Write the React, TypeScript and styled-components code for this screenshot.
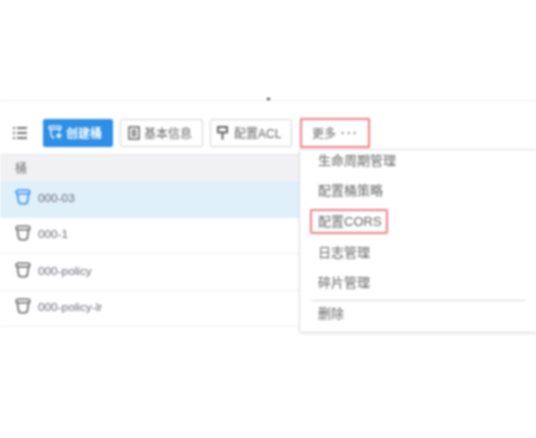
import styled, { createGlobalStyle } from "styled-components";
import type { ReactNode } from "react";

const GlobalStyle = createGlobalStyle`
  html, body {
    margin: 0;
    padding: 0;
    background: #fff;
  }
  body {
    font-family: "Liberation Sans", "Noto Sans CJK SC", sans-serif;
    color: #666;
  }
`;

function BucketIcon({ color = "#666" }: { color?: string }) {
  return (
    <BucketSvg width="16" height="16" viewBox="0 0 16 16" fill="none" stroke={color} strokeWidth="1.6">
      <rect x="1.2" y="1.2" width="13.6" height="3.6" rx="1.8" />
      <path d="M2.4 5 L3.5 12.2 Q3.8 14.8 6.2 14.8 H9.8 Q12.2 14.8 12.5 12.2 L13.6 5" />
    </BucketSvg>
  );
}

function CreateIcon() {
  return (
    <svg width="15" height="15" viewBox="0 0 16 16" fill="none" stroke="#fff" strokeWidth="1.5">
      <rect x="1" y="1.2" width="13" height="3" rx="1.5" />
      <path d="M2.6 4.5 L3.6 11.6 Q3.9 13.4 5.6 13.4 H7 M12.6 4.5 L12.2 7" />
      <path d="M11.5 8.4 V14.4 M8.6 11.4 H14.6" strokeWidth="1.9" />
    </svg>
  );
}

function InfoIcon() {
  return (
    <svg width="12" height="14" viewBox="0 0 12 14" fill="none" stroke="#555" strokeWidth="1.4">
      <rect x="1" y="1" width="10" height="12" />
      <path d="M3.6 4.5 H8.4 M3.6 7 H8.4 M3.6 9.5 H8.4" />
    </svg>
  );
}

function AclIcon() {
  return (
    <svg width="11" height="14" viewBox="0 0 11 14" fill="none" stroke="#555" strokeWidth="1.8">
      <rect x="1" y="1" width="9" height="5.4" />
      <path d="M5.5 6.4 V13.6" />
    </svg>
  );
}

function ListIcon() {
  return (
    <svg width="14" height="14" viewBox="0 0 14 14" fill="none" stroke="#444" strokeWidth="1.7">
      <path d="M0 2 H2 M4 2 H14 M0 7 H2 M4 7 H14 M0 12 H2 M4 12 H14" />
    </svg>
  );
}

const BucketSvg = styled.svg`
  margin-bottom: 2px;
`;

const Page = styled.div`
  position: relative;
  width: 536px;
  height: 438px;
  padding-top: 100px;
  box-sizing: border-box;
  overflow: hidden;
  background: #fff;
  filter: blur(0.8px);
`;

const Tick = styled.span`
  position: absolute;
  left: 267px;
  top: 98px;
  width: 3px;
  height: 2px;
  background: #333;
`;

const Toolbar = styled.div`
  display: flex;
  align-items: center;
  height: 55px;
  box-sizing: border-box;
  padding: 11px 0 0 13px;
  border-top: 1px solid #f1f1f1;
  border-bottom: 1px solid #e6e6e8;
`;

const ListToggle = styled.span`
  display: flex;
  margin-right: 16px;
`;

const ToolButton = styled.button<{ $primary?: boolean; $width: number; $gap: number; $inset: number; $iconGap: number }>`
  display: flex;
  align-items: center;
  gap: ${(p) => p.$iconGap}px;
  width: ${(p) => p.$width}px;
  height: 28px;
  padding: 0 0 1px ${(p) => p.$inset}px;
  margin-right: ${(p) => p.$gap}px;
  box-sizing: border-box;
  font: 12px "Liberation Sans", "Noto Sans CJK SC", sans-serif;
  font-weight: ${(p) => (p.$primary ? 700 : 400)};
  color: ${(p) => (p.$primary ? "#fff" : "#666")};
  background: ${(p) => (p.$primary ? "#2d8fe6" : "#fff")};
  border: 1px solid ${(p) => (p.$primary ? "#2d8fe6" : "#d4d4d4")};
  border-radius: 2px;
`;

const MoreButton = styled.div`
  display: flex;
  align-items: center;
  gap: 5px;
  width: 70px;
  height: 30px;
  padding: 0 0 2px 10px;
  box-sizing: border-box;
  font-size: 12px;
  color: #666;
  border: 2px solid #f07f83;
  border-radius: 1px;
`;

const Dots = styled.span`
  letter-spacing: 2px;
  font-weight: 700;
  font-size: 12px;
  color: #777;
  margin-top: 2px;
`;

const TableHead = styled.div`
  display: flex;
  align-items: center;
  height: 26px;
  padding: 0 0 2px 15px;
  box-sizing: border-box;
  font-size: 12px;
  color: #777;
  background: #f1f1f3;
`;

const Row = styled.div<{ $selected?: boolean }>`
  display: flex;
  align-items: center;
  gap: 7px;
  height: 36.5px;
  box-sizing: border-box;
  padding: 0 0 2px 15px;
  font-size: 11.8px;
  color: #6a6a76;
  background: ${(p) => (p.$selected ? "#dff0fb" : "#fff")};
  border-bottom: 1px solid ${(p) => (p.$selected ? "#dff0fb" : "#f4f4f4")};
`;

const Menu = styled.div`
  position: absolute;
  left: 299px;
  top: 149px;
  width: 240px;
  height: 184px;
  box-sizing: border-box;
  padding-left: 12px;
  background: #fff;
  border: 1px solid #dcdcdc;
  border-radius: 2px;
  box-shadow: 0 1px 2px rgba(0, 0, 0, 0.08);
`;

const MenuItem = styled.div<{ $marked?: boolean }>`
  display: flex;
  align-items: center;
  width: ${(p) => (p.$marked ? "78px" : "auto")};
  height: ${(p) => (p.$marked ? "25px" : "30.5px")};
  margin: ${(p) => (p.$marked ? "3px 0 3px -2px" : "0")};
  padding: 0 0 2px 6px;
  box-sizing: border-box;
  font-size: 13px;
  color: #666;
  ${(p) => p.$marked && "border: 2px solid #f07f83; border-radius: 2px;"}
`;

const DeleteItem = styled(MenuItem)`
  height: 25px;
`;

const MenuList = styled.div`
  margin-top: -5px;
`;

const Divider = styled.div`
  width: 213px;
  height: 1px;
  margin-top: 2px;
  background: #d4d4d4;
`;

const buckets = ["000-03", "000-1", "000-policy", "000-policy-lr"];
const menuItems: { label: string; marked?: boolean }[] = [
  { label: "生命周期管理" },
  { label: "配置桶策略" },
  { label: "配置CORS", marked: true },
  { label: "日志管理" },
  { label: "碎片管理" },
];

const tools: { label: string; width: number; gap: number; inset: number; iconGap: number; primary?: boolean; icon: ReactNode }[] = [
  { label: "创建桶", width: 70, gap: 7, inset: 4, iconGap: 3, primary: true, icon: <CreateIcon /> },
  { label: "基本信息", width: 83, gap: 7, inset: 7, iconGap: 4, icon: <InfoIcon /> },
  { label: "配置ACL", width: 82, gap: 8, inset: 6, iconGap: 6, icon: <AclIcon /> },
];

export default function App() {
  return (
    <Page>
      <GlobalStyle />
      <Tick />
      <Toolbar>
        <ListToggle>
          <ListIcon />
        </ListToggle>
        {tools.map((tool) => (
          <ToolButton
            key={tool.label}
            $primary={tool.primary}
            $width={tool.width}
            $gap={tool.gap}
            $inset={tool.inset}
            $iconGap={tool.iconGap}
          >
            {tool.icon}
            {tool.label}
          </ToolButton>
        ))}
        <MoreButton>
          更多 <Dots>···</Dots>
        </MoreButton>
      </Toolbar>
      <TableHead>桶</TableHead>
      {buckets.map((name, i) => (
        <Row key={name} $selected={i === 0}>
          <BucketIcon color={i === 0 ? "#2f8cf0" : "#666"} />
          {name}
        </Row>
      ))}
      <Menu>
        <MenuList>
          {menuItems.map((item) => (
            <MenuItem key={item.label} $marked={item.marked}>
              {item.label}
            </MenuItem>
          ))}
        </MenuList>
        <Divider />
        <DeleteItem>删除</DeleteItem>
      </Menu>
    </Page>
  );
}
